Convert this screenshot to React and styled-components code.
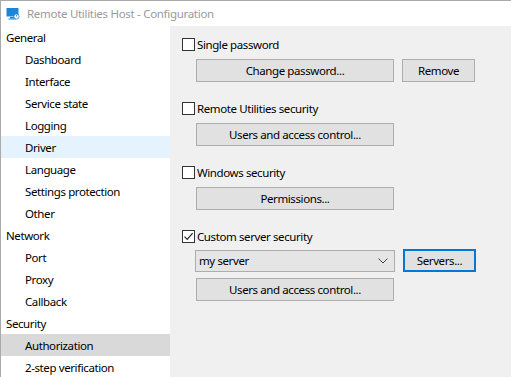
import React from "react";
import styled, { createGlobalStyle } from "styled-components";

const Global = createGlobalStyle`
  html, body { margin: 0; padding: 0; background: #fff; }
  body { font-family: "Noto Sans", "Open Sans", Arial, sans-serif; font-size: 11.5px; letter-spacing: -0.4px; color: #000; }
`;

const Window = styled.div`
  width: 511px;
  height: 377px;
  box-sizing: border-box;
  border-left: 1px solid #aaaaaa;
  border-top: 1px solid #aaaaaa;
  display: flex;
  flex-direction: column;
  overflow: hidden;
  background: #fff;
`;

const TitleBar = styled.div`
  height: 25px;
  display: flex;
  align-items: center;
  padding-left: 5px;
  gap: 7px;
  flex-shrink: 0;
`;

const TitleText = styled.span`
  color: #9a9a9a;
  font-size: 11.5px;
  letter-spacing: -0.3px;
`;

const Body = styled.div`
  flex: 1;
  display: flex;
  min-height: 0;
`;

const Sidebar = styled.div`
  width: 169px;
  flex-shrink: 0;
  background: #fff;
  display: flex;
  flex-direction: column;
`;

const TreeItem = styled.div`
  height: 22px;
  line-height: 23px;
  padding-left: ${(p) => (p.$group ? 5 : 24)}px;
  white-space: nowrap;
  background: ${(p) =>
    p.$state === "selected" ? "#d9d9d9" : p.$state === "hover" ? "#e5f3ff" : "transparent"};
`;

const Panel = styled.div`
  flex: 1;
  background: #f0f0f0;
  padding: 10px 0 0 12px;
  display: flex;
  flex-direction: column;
`;

const Section = styled.div`
  display: flex;
  flex-direction: column;
  margin-bottom: 18px;
`;

const CheckRow = styled.label`
  height: 16px;
  line-height: 15px;
  display: flex;
  align-items: center;
  gap: 2px;
`;

const Box = styled.span`
  width: 11px;
  height: 11px;
  border: 1px solid #333;
  background: #fff;
  display: flex;
  align-items: center;
  justify-content: center;
  flex-shrink: 0;
`;

const Row = styled.div`
  display: flex;
  align-items: center;
  gap: 8px;
  margin-top: ${(p) => p.$mt ?? 7}px;
  margin-left: 14px;
`;

const Button = styled.div`
  box-sizing: border-box;
  width: ${(p) => p.$w}px;
  height: 23px;
  background: #e1e1e1;
  border: ${(p) => (p.$focus ? "2px solid #0078d7" : "1px solid #adadad")};
  display: flex;
  align-items: center;
  justify-content: center;
`;

const Combo = styled.div`
  box-sizing: border-box;
  width: 200px;
  height: 22px;
  margin-left: -1px;
  background: #e5e5e5;
  border: 1px solid #adadad;
  display: flex;
  align-items: center;
  justify-content: space-between;
  padding: 0 6px 0 3px;
`;

const AppIcon = () => (
  <svg width="14" height="14" viewBox="0 0 14 14">
    <rect x="0.5" y="1" width="12" height="8.5" fill="#1a86d8" />
    <rect x="4" y="10" width="4.5" height="1.5" fill="#1a86d8" />
    <rect x="2.5" y="11.5" width="7.5" height="1" fill="#1a86d8" />
    <circle cx="10.5" cy="9.5" r="2.6" fill="#fff" stroke="#1a86d8" strokeWidth="0.8" />
    <rect x="10.1" y="7.8" width="0.8" height="1.8" fill="#1a86d8" />
  </svg>
);

const Check = () => (
  <svg width="11" height="11" viewBox="0 0 11 11">
    <path d="M1.5 5.6 L4.2 8.3 L9.6 2.2" fill="none" stroke="#222" strokeWidth="1.2" />
  </svg>
);

const Chevron = () => (
  <svg width="10" height="6" viewBox="0 0 10 6">
    <path d="M0.5 0.5 L5 5 L9.5 0.5" fill="none" stroke="#444" strokeWidth="1" />
  </svg>
);

const tree = [
  { t: "General", g: true },
  { t: "Dashboard" },
  { t: "Interface" },
  { t: "Service state" },
  { t: "Logging" },
  { t: "Driver", s: "hover" },
  { t: "Language" },
  { t: "Settings protection" },
  { t: "Other" },
  { t: "Network", g: true },
  { t: "Port" },
  { t: "Proxy" },
  { t: "Callback" },
  { t: "Security", g: true },
  { t: "Authorization", s: "selected" },
  { t: "2-step verification" },
];

const CheckBox = ({ checked, children }) => (
  <CheckRow>
    <Box>{checked && <Check />}</Box>
    <span>{children}</span>
  </CheckRow>
);

export default function App() {
  return (
    <>
      <Global />
      <Window>
        <TitleBar>
          <AppIcon />
          <TitleText>Remote Utilities Host - Configuration</TitleText>
        </TitleBar>
        <Body>
          <Sidebar>
            {tree.map((i) => (
              <TreeItem key={i.t} $group={i.g} $state={i.s}>
                {i.t}
              </TreeItem>
            ))}
          </Sidebar>
          <Panel>
            <Section>
              <CheckBox>Single password</CheckBox>
              <Row>
                <Button $w={198}>Change password...</Button>
                <Button $w={73}>Remove</Button>
              </Row>
            </Section>
            <Section>
              <CheckBox>Remote Utilities security</CheckBox>
              <Row>
                <Button $w={198}>Users and access control...</Button>
              </Row>
            </Section>
            <Section>
              <CheckBox>Windows security</CheckBox>
              <Row>
                <Button $w={198}>Permissions...</Button>
              </Row>
            </Section>
            <Section>
              <CheckBox checked>Custom server security</CheckBox>
              <Row $mt={5}>
                <Combo>
                  <span>my server</span>
                  <Chevron />
                </Combo>
                <Button $w={73} $focus>Servers...</Button>
              </Row>
              <Row $mt={6}>
                <Button $w={198}>Users and access control...</Button>
              </Row>
            </Section>
          </Panel>
        </Body>
      </Window>
    </>
  );
}
